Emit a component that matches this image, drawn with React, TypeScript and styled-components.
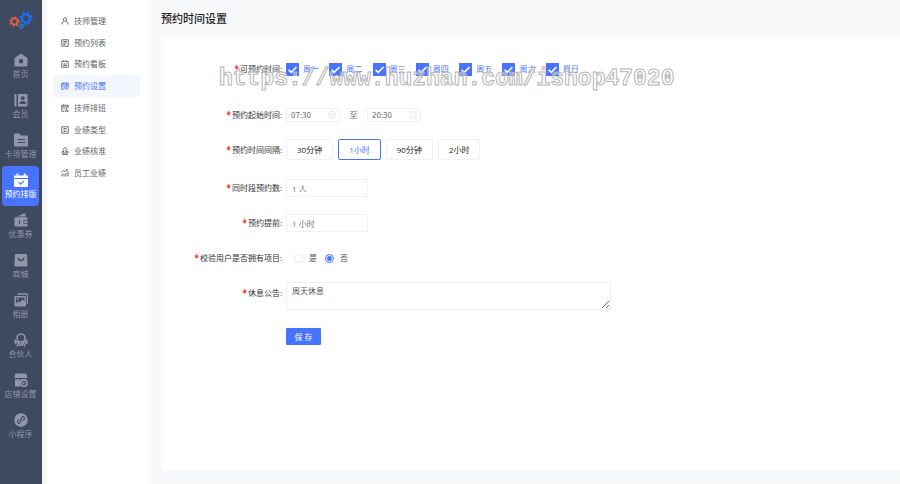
import React from "react";
import styled, { createGlobalStyle, css } from "styled-components";

const GlobalStyle = createGlobalStyle`
  * { box-sizing: border-box; }
  body {
    margin: 0;
    background: #f7f8fa;
    font-family: "Open Sans", "Noto Sans CJK SC", sans-serif;
    font-size: 8px;
    line-height: 12px;
    color: #333;
  }
  button, input, textarea { font: inherit; color: inherit; margin: 0; }
`;

const blue = "#4873ff";

const Page = styled.div`
  display: flex;
  min-height: 100vh;
`;

const Rail = styled.nav`
  flex: none;
  width: 42px;
  padding: 10px 2px 0;
  background: #3f4960;
`;

const Logo = styled.a`
  display: flex;
  justify-content: center;
  height: 36px;
`;

const RailItem = styled.a<{ $active?: boolean }>`
  display: flex;
  flex-direction: column;
  align-items: center;
  gap: 1px;
  height: 40px;
  margin-right: 1px;
  padding-top: 7px;
  border-radius: 4px;
  color: ${(p) => (p.$active ? "#fff" : "#9097a8")};
  background: ${(p) => (p.$active ? blue : "transparent")};
  text-decoration: none;
  white-space: nowrap;
  svg { flex: none; }
`;

const SubMenu = styled.nav`
  flex: none;
  width: 109px;
  padding: 10px 11px 0;
  background: linear-gradient(to right, #f3f3f5, #fff 8px);
`;

const SubList = styled.div`
  display: grid;
  grid-auto-rows: 1fr;
  height: 174px;
`;

const SubItem = styled.a<{ $active?: boolean }>`
  display: flex;
  align-items: center;
  gap: 5px;
  padding-left: 8px;
  border-radius: 2px;
  color: ${(p) => (p.$active ? blue : "#5c5f66")};
  background: ${(p) => (p.$active ? "#f3f6ff" : "transparent")};
  text-decoration: none;
`;

const Main = styled.main`
  flex: 1;
  min-width: 0;
  display: flex;
  flex-direction: column;
  padding: 11px 0 13px 10px;
`;

const Title = styled.h1`
  margin: 0 0 10px;
  font-size: 11px;
  line-height: 16px;
  font-weight: 500;
  color: #222;
`;

const Panel = styled.form`
  position: relative;
  flex: 1;
  display: flex;
  flex-direction: column;
  align-items: flex-start;
  gap: 17px;
  padding: 25px 0;
  background: #fff;
`;

const Row = styled.div<{ $before?: number; $top?: boolean }>`
  display: flex;
  align-items: ${(p) => (p.$top ? "flex-start" : "center")};
  min-height: 14px;
  margin-top: ${(p) => p.$before ?? 0}px;
`;

const labelStyle = css`
  width: 121px;
  margin-right: 4px;
  text-align: right;
  white-space: nowrap;
  color: #333;
`;

const Label = styled.label<{ $drop?: boolean }>`
  ${labelStyle}
  padding-top: ${(p) => (p.$drop ? 5 : 0)}px;
`;

const GroupLabel = styled.span`
  ${labelStyle}
`;

const Star = styled.span`
  margin-right: 1px;
  font-weight: 700;
  color: #f22;
`;

const Days = styled.div`
  display: grid;
  grid-template-columns: repeat(7, 1fr);
  width: 303px;
`;

const Day = styled.label`
  display: flex;
  align-items: center;
  gap: 4px;
  color: ${blue};
`;

const Check = styled.input`
  appearance: none;
  width: 13px;
  height: 13px;
  background: #fff;
  border: 1px solid #dcdfe6;
  &:checked {
    border: 0;
    background: ${blue}
      url("data:image/svg+xml,%3Csvg xmlns='http://www.w3.org/2000/svg' viewBox='0 0 13 13'%3E%3Cpath d='M2.5 6.8l2.8 2.6L10.5 4' fill='none' stroke='white' stroke-width='1.6'/%3E%3C/svg%3E");
  }
`;

const TimeBox = styled.span`
  display: flex;
  align-items: center;
  width: 54px;
  height: 14px;
  padding: 0 3px 0 4px;
  border: 1px solid #eef0f3;
  border-radius: 1px;
  color: #666;
`;

const TimeInput = styled.input`
  flex: 1;
  min-width: 0;
  padding: 0;
  border: 0;
  outline: 0;
  background: transparent;
  font-family: "Noto Sans CJK SC", sans-serif;
`;

const To = styled.span`
  width: 27px;
  text-align: center;
  color: #666;
`;

const Choices = styled.div`
  display: flex;
  gap: 5px;
`;

const Choice = styled.button<{ $active?: boolean }>`
  height: 21px;
  padding: 0 10px;
  border: 1px solid ${(p) => (p.$active ? blue : "#f0f1f4")};
  border-radius: 2px;
  background: #fff;
  color: ${(p) => (p.$active ? blue : "#222")};
  line-height: 12px;
`;

const TextInput = styled.input`
  width: 82px;
  height: 18px;
  padding: 0 5px;
  border: 1px solid #f0f1f5;
  outline: 0;
  color: #777;
`;

const Radios = styled.div`
  display: flex;
  gap: 8px;
  padding-left: 8px;
`;

const RadioLabel = styled.label`
  display: flex;
  align-items: center;
  gap: 6px;
  color: #555;
`;

const Radio = styled.input`
  appearance: none;
  width: 9px;
  height: 9px;
  border: 1px solid #e4e6eb;
  border-radius: 50%;
  &:checked {
    border-color: ${blue};
    background: radial-gradient(circle, ${blue} 2px, #fff 3px);
  }
`;

const Notice = styled.textarea`
  display: block;
  width: 325px;
  height: 28px;
  padding: 2px 5px;
  border: 1px solid #eeeff5;
  outline: 0;
  resize: both;
  color: #555;
`;

const Save = styled.button`
  width: 35px;
  height: 17px;
  margin: 1px 0 0 125px;
  padding: 0;
  border: 0;
  border-radius: 1px;
  background: ${blue};
  color: #fff;
`;

const Watermark = styled.div`
  position: absolute;
  left: 58px;
  top: 27px;
  font-family: "Liberation Mono", monospace;
  font-size: 23px;
  font-weight: 700;
  line-height: 30px;
  white-space: nowrap;
  color: rgba(255, 255, 255, 0.4);
  -webkit-text-stroke: 1px #b4b4b4;
  pointer-events: none;
`;

const dark = "#3f4960";

const railIcons: Record<string, React.ReactNode> = {
  home: (
    <path fillRule="evenodd" d="M7 0.5L13.5 5v7.5a1 1 0 0 1-1 1h-11a1 1 0 0 1-1-1V5zM7 6a2.2 2.2 0 1 0 0 4.4A2.2 2.2 0 0 0 7 6z" />
  ),
  member: (
    <>
      <path d="M0.5 1h2v12.5h-2zM4 1h8.500a1 1 0 0 1 1 1v10.500a1 1 0 0 1-1 1H4z" />
      <circle cx="8.800" cy="5.200" r="1.900" fill={dark} />
      <path d="M5.500 11c0-4 6.600-4 6.600 0z" fill={dark} />
    </>
  ),
  card: (
    <>
      <path d="M0 1.500a1 1 0 0 1 1-1h4.500L7 2.500h6a1 1 0 0 1 1 1v9a1 1 0 0 1-1 1H1a1 1 0 0 1-1-1z" />
      <path d="M3.500 6.500h7.500M3.500 9.500h7.500" stroke={dark} />
    </>
  ),
  calendar: (
    <>
      <path d="M0 2.500h2.500V0.500h1.800v2h5.400v-2h1.800v2H14V5H0zM0 6h14v7a1 1 0 0 1-1 1H1a1 1 0 0 1-1-1z" />
      <path d="M4.700 9.200l2 2 3.200-3.400" fill="none" stroke={blue} strokeWidth="1.200" />
    </>
  ),
  wallet: (
    <>
      <path d="M3 3.500L10 0.500h1.500v3z" />
      <path d="M1.500 4.200h11a1 1 0 0 1 1 1v7.300a1 1 0 0 1-1 1h-11a1 1 0 0 1-1-1V5.200a1 1 0 0 1 1-1z" />
      <path d="M5.500 7v3.800" stroke={dark} strokeWidth="1.300" />
      <path d="M14 7.300H9.800v3.200H14" fill="none" stroke={dark} strokeWidth="0.800" />
    </>
  ),
  mall: (
    <>
      <path d="M2 1h10a1 1 0 0 1 1 1l.6 10a1.300 1.300 0 0 1-1.300 1.400H1.700A1.300 1.300 0 0 1 .4 12L1 2a1 1 0 0 1 1-1z" />
      <path d="M4 4.500c.3 4 5.700 4 6 0" fill="none" stroke={dark} strokeWidth="1.300" />
    </>
  ),
  album: (
    <>
      <path d="M3.500 1h9a1 1 0 0 1 1 1v9" fill="none" stroke="currentColor" strokeWidth="1.300" />
      <path fillRule="evenodd" d="M1.500 3h9.500a1 1 0 0 1 1 1v8.500a1 1 0 0 1-1 1H1.500a1 1 0 0 1-1-1V4a1 1 0 0 1 1-1zM2 4.500v6L4.500 8 6 9.500l2.500-3 2 2v-4z" />
      <circle cx="3.800" cy="6" r="0.900" />
    </>
  ),
  partner: (
    <g fill="none" stroke="currentColor" strokeWidth="1.600">
      <circle cx="7" cy="5" r="4" />
      <path d="M3.500 8L1 11M4.800 9L3 13.500M5.800 10v3M10.500 8l2.500 3M9.200 9l1.800 4.500M8.200 10v3M1.200 6.500v3M12.800 6.500v3" />
    </g>
  ),
  shop: (
    <>
      <path d="M2 0.500h9.500a1 1 0 0 1 1 .8l.8 3.700H0.300l.8-3.700a1 1 0 0 1 .9-.8zM1 6.200h5.500v7.300H1z" />
      <path d="M7 6.200h5.500V8H7z" />
      <circle cx="10" cy="10.200" r="3.900" />
      <circle cx="10" cy="10.200" r="1.900" fill="none" stroke={dark} />
      <path d="M10 10.200h1.500" stroke={dark} />
    </>
  ),
  mini: (
    <>
      <circle cx="7" cy="7" r="6.800" />
      <path d="M5.300 6.800C2.800 7 3 10.300 5 10.300c3 0 1-6.600 4-6.600 2 0 2.200 3.200-.3 3.500" fill="none" stroke={dark} strokeWidth="1.200" />
    </>
  ),
};

const rail = [
  ["home", "首页"],
  ["member", "会员"],
  ["card", "卡项管理"],
  ["calendar", "预约排版"],
  ["wallet", "优惠券"],
  ["mall", "商城"],
  ["album", "相册"],
  ["partner", "合伙人"],
  ["shop", "店铺设置"],
  ["mini", "小程序"],
];

const subIcons: Record<string, React.ReactNode> = {
  person: <path d="M8 1.500a3.500 3.500 0 1 1 0 7 3.500 3.500 0 0 1 0-7zM1.500 15c.5-4 2.500-6.500 4-6.500M14.500 15c-.5-4-2.500-6.500-4-6.500" />,
  list: <path d="M1.500 1.500h13v13h-13zM4.500 5h7M4.500 8h7M4.500 11h4" />,
  board: <path d="M1.500 2.500h13v12h-13zM5 1v3M11 1v3M4.500 8h7M4.500 11h7" />,
  setting: (
    <>
      <path d="M14.500 8V2.500h-13v12H6M1.500 6h13M5 1v3M11 1v3M4.500 9.500H6" />
      <circle cx="10.800" cy="11" r="3.400" />
      <path d="M10.500 9.500v2h1.500" />
    </>
  ),
  shift: <path d="M14.500 7V2.500h-13v12H6M1.500 6h13M5 1v3M4.500 9.500h3M8 14.500c0-4 6.500-4 6.500 0zM11.200 8v3" />,
  type: <path d="M1.500 1.500h13v13h-13zM5 5h6M5 8h3M10 8h1.500M5 11h6" />,
  stamp: <path d="M8 1.500a3 3 0 0 1 2 5.300V9h4v3H2V9h4V6.800a3 3 0 0 1 2-5.300zM2 14.800h12" />,
  chart: <path d="M2 9v6M6 9v6M10 8v7M14 4v11M1 6l4-3 3 2L13 1.500M10.500 1H14" />,
};

const sub = [
  ["person", "技师管理"],
  ["list", "预约列表"],
  ["board", "预约看板"],
  ["setting", "预约设置"],
  ["shift", "技师排班"],
  ["type", "业绩类型"],
  ["stamp", "业绩核准"],
  ["chart", "员工业绩"],
];

const Gear = ({ x, y, r, color }: { x: number; y: number; r: number; color: string }) => (
  <g transform={`translate(${x} ${y})`} stroke={color} fill="none">
    <circle r={r} strokeWidth={r * 0.55} />
    <circle r={r * 1.45} strokeWidth={r * 0.5} strokeDasharray={`${r * 0.57} ${r * 0.569}`} />
  </g>
);

const ClockIcon = () => (
  <svg width="8" height="8" viewBox="0 0 16 16" fill="none" stroke="#dcdfe6" strokeWidth="1.500" aria-hidden>
    <circle cx="8" cy="8" r="7" />
    <path d="M8 4v4.500h3.500" />
  </svg>
);

export default function App() {
  return (
    <>
      <GlobalStyle />
      <Page>
        <Rail>
          <Logo href="#" aria-label="首页">
            <svg width="24" height="20" viewBox="0 0 24 20">
              <Gear x={5.500} y={11.500} r={3} color="#f0603c" />
              <Gear x={17} y={8.500} r={3.900} color="#1f6cf5" />
              <Gear x={12.200} y={16} r={1.700} color="#2590dc" />
            </svg>
          </Logo>
          {rail.map(([icon, text]) => (
            <RailItem key={icon} href="#" $active={icon === "calendar"}>
              <svg width="14" height="14" viewBox="0 0 14 14" fill="currentColor">{railIcons[icon]}</svg>
              {text}
            </RailItem>
          ))}
        </Rail>
        <SubMenu>
          <SubList>
            {sub.map(([icon, text]) => (
              <SubItem key={icon} href="#" $active={icon === "setting"}>
                <svg width="8" height="8" viewBox="0 0 16 16" fill="none" stroke="currentColor" strokeWidth="1.800">
                  {subIcons[icon]}
                </svg>
                {text}
              </SubItem>
            ))}
          </SubList>
        </SubMenu>
        <Main>
          <Title>预约时间设置</Title>
          <Panel onSubmit={(e) => e.preventDefault()}>
            <Row>
              <GroupLabel><Star>*</Star>可预约时间:</GroupLabel>
              <Days>
                {["周一", "周二", "周三", "周四", "周五", "周六", "周日"].map((d) => (
                  <Day key={d}><Check type="checkbox" defaultChecked />{d}</Day>
                ))}
              </Days>
            </Row>
            <Row $before={15}>
              <Label htmlFor="start"><Star>*</Star>预约起始时间:</Label>
              <TimeBox><TimeInput id="start" defaultValue="07:30" /><ClockIcon /></TimeBox>
              <To>至</To>
              <TimeBox><TimeInput aria-label="结束时间" defaultValue="20:30" /><ClockIcon /></TimeBox>
            </Row>
            <Row>
              <GroupLabel><Star>*</Star>预约时间间隔:</GroupLabel>
              <Choices>
                {["30分钟", "1小时", "90分钟", "2小时"].map((c) => (
                  <Choice key={c} type="button" $active={c === "1小时"}>{c}</Choice>
                ))}
              </Choices>
            </Row>
            <Row $before={2}>
              <Label htmlFor="count"><Star>*</Star>同时段预约数:</Label>
              <TextInput id="count" defaultValue="1 人" />
            </Row>
            <Row>
              <Label htmlFor="ahead"><Star>*</Star>预约提前:</Label>
              <TextInput id="ahead" defaultValue="1 小时" />
            </Row>
            <Row $before={2}>
              <GroupLabel><Star>*</Star>校验用户是否拥有项目:</GroupLabel>
              <Radios>
                <RadioLabel><Radio type="radio" name="verify" />是</RadioLabel>
                <RadioLabel><Radio type="radio" name="verify" defaultChecked />否</RadioLabel>
              </Radios>
            </Row>
            <Row $top>
              <Label htmlFor="notice" $drop><Star>*</Star>休息公告:</Label>
              <Notice id="notice" defaultValue="周天休息" />
            </Row>
            <Save type="submit">保 存</Save>
            <Watermark>https://www.huzhan.com/ishop47020</Watermark>
          </Panel>
        </Main>
      </Page>
    </>
  );
}
